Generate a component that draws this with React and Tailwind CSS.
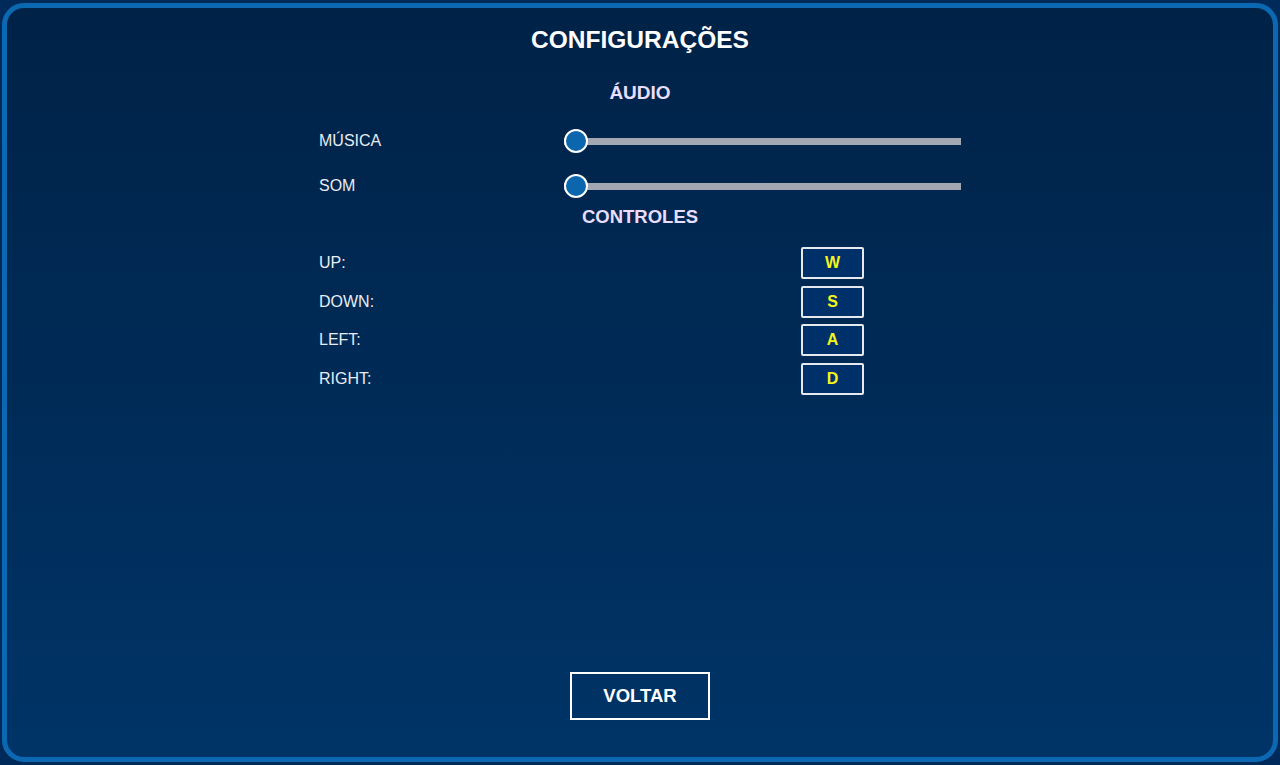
import React, { useState } from 'react';

function Slider({ value }) {
  return (
    <div className="relative w-[397px] h-[24px] flex items-center">
      <div className="w-full h-[7px] bg-[#a3a7b2]" />
      <div
        className="absolute top-0 w-[24px] h-[24px] rounded-full bg-[#0b66ad] border-2 border-white"
        style={{ left: `${value * 3.73}px` }}
      />
    </div>
  );
}

export default function App() {
  const [music] = useState(0);
  const [sound] = useState(0);
  const keys = [
    ['UP:', 'W'],
    ['DOWN:', 'S'],
    ['LEFT:', 'A'],
    ['RIGHT:', 'D'],
  ];

  return (
    <div className="w-[1280px] h-[765px] bg-[#002a5a] p-[3px_2px_3px_2px]" style={{ fontFamily: '"Liberation Sans", Arial, sans-serif' }}>
      <div className="h-full rounded-[22px] border-[5px] border-[#0c68b1] bg-gradient-to-b from-[#002247] to-[#003467] flex flex-col items-center">
        <h1 className="mt-[17px] text-[24.5px] leading-[30px] font-bold text-white">CONFIGURAÇÕES</h1>

        <h2 className="mt-[27px] text-[19px] leading-[22px] font-bold text-[#e8deff]">ÁUDIO</h2>

        <div className="w-[642px] mt-[25px] flex flex-col gap-[21px]">
          <div className="flex items-center">
            <span className="w-[245px] text-[16px] text-[#e9ecf2]">MÚSICA</span>
            <Slider value={music} />
          </div>
          <div className="flex items-center">
            <span className="w-[245px] text-[16px] text-[#e9ecf2]">SOM</span>
            <Slider value={sound} />
          </div>
        </div>

        <h2 className="mt-[8px] text-[18.5px] leading-[22px] font-bold text-[#e8deff]">CONTROLES</h2>

        <div className="w-[642px] mt-[19px] flex flex-col gap-[6.5px]">
          {keys.map(([label, key]) => (
            <div key={label} className="flex items-center">
              <span className="w-[482px] text-[16px] text-[#e9ecf2]">{label}</span>
              <button className="w-[63px] h-[32px] border-2 border-[#e6e9ee] rounded-[2px] bg-[#00306a] text-[#f5f51a] font-bold text-[16px]">
                {key}
              </button>
            </div>
          ))}
        </div>

        <div className="flex-1" />

        <button className="mb-[37px] w-[140px] h-[48px] border-2 border-white text-white font-bold text-[18.5px] bg-transparent">
          VOLTAR
        </button>
      </div>
    </div>
  );
}
